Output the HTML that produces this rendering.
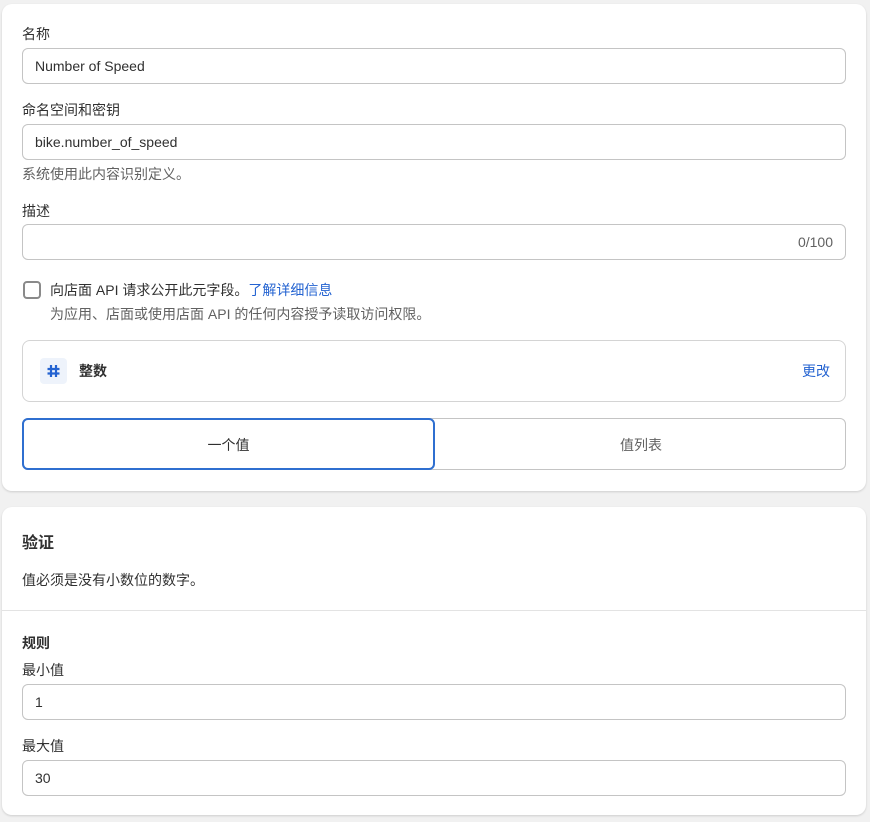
<!DOCTYPE html>
<html><head><meta charset="utf-8"><style>
*{box-sizing:border-box;margin:0;padding:0}
body{width:870px;height:822px;background:#f1f1f1;font-family:"Liberation Sans","Noto Sans CJK SC",sans-serif;font-size:14px;color:#303030;position:relative;overflow:hidden}
.card{position:absolute;left:2px;width:864px;background:#fff;border-radius:10px;box-shadow:0 1px 2px rgba(0,0,0,.15)}
.a{position:absolute;white-space:nowrap}
.inp{position:absolute;left:20px;width:824px;height:36px;border:1px solid #c4c4c4;border-radius:6px;padding:0 12px;line-height:34px;color:#303030}
.sub{color:#616161}
</style></head><body>
<div class="card" style="top:4px;height:487px">
<div class="a" style="left:20px;top:20px">名称</div>
<div class="inp" style="top:44px">Number of Speed</div>
<div class="a" style="left:20px;top:96px">命名空间和密钥</div>
<div class="inp" style="top:120px">bike.number_of_speed</div>
<div class="a sub" style="left:20px;top:160px">系统使用此内容识别定义。</div>
<div class="a" style="left:20px;top:197px">描述</div>
<div class="inp" style="top:220px;text-align:right;color:#616161">0/100</div>
<div class="a" style="left:21px;top:277px;width:18px;height:18px;border:2px solid #8a8a8a;border-radius:4px"></div>
<div class="a" style="left:48px;top:276px">向店面 API 请求公开此元字段。<span style="color:#2463d1">了解详细信息</span></div>
<div class="a sub" style="left:48px;top:300px">为应用、店面或使用店面 API 的任何内容授予读取访问权限。</div>
<div class="a" style="left:20px;top:336px;width:824px;height:62px;border:1px solid #d4d4d4;border-radius:8px">
<div class="a" style="left:17px;top:17px;width:27px;height:26px;background:#eef3fb;border-radius:4px">
<svg width="27" height="26" viewBox="0 0 27 26"><path d="M11 7v12M16 7v12M7.5 11h12M7.5 15.5h12" stroke="#2463d1" stroke-width="2.2" fill="none"/></svg></div>
<div class="a" style="left:56px;top:20px;font-weight:bold">整数</div>
<div class="a" style="right:15px;top:20px;color:#2463d1">更改</div>
</div>
<div class="a" style="left:20px;top:414px;width:824px;height:52px;border:1px solid #c4c4c4;border-radius:6px">
<div class="a" style="left:412px;top:16px;width:412px;text-align:center;color:#616161">值列表</div>
</div>
<div class="a" style="left:20px;top:414px;width:413px;height:52px;border:2px solid #2f6fd0;border-radius:6px;text-align:center;line-height:50px">一个值</div>
</div>
<div class="card" style="top:507px;height:308px">
<div class="a" style="left:20px;top:22px;font-size:16px;font-weight:bold">验证</div>
<div class="a" style="left:20px;top:63px">值必须是没有小数位的数字。</div>
<div class="a" style="left:0;top:103px;width:864px;height:1px;background:#e3e3e3"></div>
<div class="a" style="left:20px;top:126px;font-weight:bold">规则</div>
<div class="a" style="left:20px;top:153px">最小值</div>
<div class="inp" style="top:177px">1</div>
<div class="a" style="left:20px;top:229px">最大值</div>
<div class="inp" style="top:253px">30</div>
</div>
</body></html>
